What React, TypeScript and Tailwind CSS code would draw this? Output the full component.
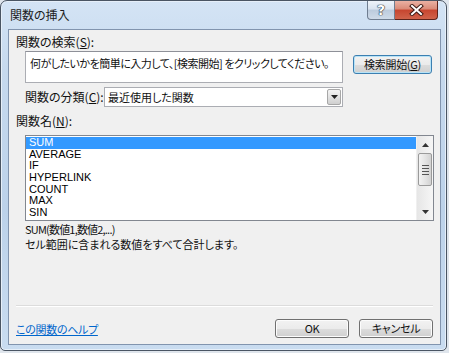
import React from 'react';

const jp = "font-['Noto_Sans_CJK_JP',sans-serif] [font-feature-settings:'palt']";

const functions = ['SUM', 'AVERAGE', 'IF', 'HYPERLINK', 'COUNT', 'MAX', 'SIN'];

function CaptionButtons() {
  return (
    <div className="flex self-start mr-[8px]">
      {/* help */}
      <div className="w-[28px] h-[19px] border border-t-0 border-[#6f7d90] rounded-bl-[4px] bg-[linear-gradient(#eef3f9,#d9e3ef_45%,#bccbdd_50%,#cfdbe9)] flex items-center justify-center">
        <span className="font-['DejaVu_Sans',sans-serif] text-[14px] font-bold leading-none text-white [text-shadow:0_0_1px_#1d2836,0_0_1px_#1d2836,0_0_1px_#1d2836]">?</span>
      </div>
      {/* close */}
      <div className="w-[43px] h-[19px] border border-t-0 border-l-0 border-[#5d231b] rounded-br-[4px] bg-[linear-gradient(#eab1a3,#d98a77_45%,#c7452f_50%,#d0634b)] flex items-center justify-center">
        <svg width="15" height="12" viewBox="0 0 15 12">
          <path d="M3 2 L12 10 M12 2 L3 10" stroke="#3d1a14" strokeWidth="4" strokeLinecap="square" />
          <path d="M3 2 L12 10 M12 2 L3 10" stroke="#ffffff" strokeWidth="2" strokeLinecap="square" />
        </svg>
      </div>
    </div>
  );
}

function Button({ children, primary, className }: { children: React.ReactNode; primary?: boolean; className?: string }) {
  return (
    <div
      className={
        'flex items-center justify-center rounded-[3px] border bg-[linear-gradient(#f2f2f2,#ebebeb_50%,#dddddd_50%,#cfcfcf)] text-[11px] tracking-[-0.3px] leading-none text-[#111] ' +
        (primary ? 'border-[#3c7fb1] shadow-[inset_0_0_0_1px_#b7e3f7] ' : 'border-[#707070] shadow-[inset_0_0_0_1px_#fcfcfc] ') +
        (className ?? '')
      }
    >
      {children}
    </div>
  );
}

function ScrollBar() {
  return (
    <div className="w-[17px] h-full flex flex-col bg-[linear-gradient(90deg,#e6e6e6,#f6f6f6)] border-l border-[#f0f0f0]">
      <div className="h-[17px] flex items-center justify-center">
        <svg width="7" height="4" viewBox="0 0 7 4"><path d="M0 4 L3.5 0 L7 4 Z" fill="#333" /></svg>
      </div>
      <div className="mx-[1px] h-[33px] rounded-[2px] border border-[#9a9a9a] bg-[linear-gradient(90deg,#f3f3f3,#e4e4e4_50%,#d2d2d2)] flex flex-col items-center justify-center gap-[2px]">
        <div className="w-[7px] h-px bg-[#555]" />
        <div className="w-[7px] h-px bg-[#555]" />
        <div className="w-[7px] h-px bg-[#555]" />
        <div className="w-[7px] h-px bg-[#555]" />
      </div>
      <div className="flex-1" />
      <div className="h-[17px] flex items-center justify-center">
        <svg width="7" height="4" viewBox="0 0 7 4"><path d="M0 0 L3.5 4 L7 0 Z" fill="#333" /></svg>
      </div>
    </div>
  );
}

export default function App() {
  return (
    <div className="w-[449px] h-[353px] bg-[#dfe5ec] overflow-hidden">
      <div className={`w-[447px] h-[351px] rounded-t-[7px] rounded-b-[5px] border border-[#4a5563] bg-[linear-gradient(#d4e4f5,#c6d9ee_20%,#bcd2ea_60%,#c9dcf0)] shadow-[inset_0_0_0_1px_#e6eff9] flex flex-col ${jp}`}>
        {/* title bar */}
        <div className="h-[28px] flex justify-between">
          <div className="pl-[9px] pt-[6px] text-[12px] leading-[16px] text-[#1b1b1b]">関数の挿入</div>
          <CaptionButtons />
        </div>

        {/* client area */}
        <div className="ml-[7px] w-[433px] h-[316px] border border-[#8194ae] bg-[#f0f0f0] flex flex-col text-[12px] text-[#111]">
          <div className="mt-[5px] pl-[7px] leading-[14px]">
            関数の検索(<span className="underline">S</span>):
          </div>

          <div className="mt-[2px] pl-[16px] flex items-start">
            <div className="w-[318px] h-[32px] border border-[#abadb3] border-t-[#8e9098] bg-white pl-[4px] pt-[4px] text-[11px] leading-[14px] tracking-[-0.5px] whitespace-nowrap overflow-hidden">
              何がしたいかを簡単に入力して、[検索開始] をクリックしてください。
            </div>
            <Button primary className="ml-[10px] mt-[4px] w-[79px] h-[19px]">
              検索開始(<span className="underline">G</span>)
            </Button>
          </div>

          <div className="mt-[4px] pl-[16px] flex items-center">
            <div className="w-[79px] leading-[14px]">
              関数の分類(<span className="underline">C</span>):
            </div>
            <div className="w-[239px] h-[20px] border border-[#abadb3] bg-white flex items-center">
              <div className="flex-1 pl-[3px] text-[11px] leading-[14px]">最近使用した関数</div>
              <div className="w-[14px] h-[16px] mr-[1px] border border-[#a7a7a7] rounded-[2px] bg-[linear-gradient(#f4f4f4,#e2e2e2_50%,#cfcfcf)] flex items-center justify-center">
                <svg width="7" height="4" viewBox="0 0 7 4"><path d="M0 0 L3.5 4 L7 0 Z" fill="#222" /></svg>
              </div>
            </div>
          </div>

          <div className="mt-[7px] pl-[7px] leading-[14px]">
            関数名(<span className="underline">N</span>):
          </div>

          <div className="mt-[7px] ml-[16px] w-[409px] h-[86px] border border-[#828790] bg-white flex">
            <div className="flex-1 pt-[1px] font-['Liberation_Sans',sans-serif] text-[11px]">
              {functions.map((f, i) => (
                <div
                  key={f}
                  className={
                    'h-[11.7px] leading-[11.7px] pl-[3px] ' +
                    (i === 0 ? 'bg-[#3399ff] text-white' : 'text-black')
                  }
                >
                  {f}
                </div>
              ))}
            </div>
            <ScrollBar />
          </div>

          <div className="mt-[1px] pl-[16px] text-[11px] leading-[15px] tracking-[-0.8px]">SUM(数値1,数値2,...)</div>
          <div className="pl-[16px] text-[11px] leading-[15px]">セル範囲に含まれる数値をすべて合計します。</div>

          <div className="flex-1" />

          <div className="mx-[7px] h-px bg-[#dcdcdc] border-b border-white box-content" />
          <div className="mt-[12px] mb-[6px] pl-[7px] pr-[7px] flex items-center">
            <span className="flex-1 text-[11px] tracking-[-0.3px] text-[#0066cc] underline leading-[14px]">この関数のヘルプ</span>
            <Button className="w-[74px] h-[19px]">OK</Button>
            <Button className="ml-[10px] w-[74px] h-[19px]">キャンセル</Button>
          </div>
        </div>
      </div>
    </div>
  );
}
